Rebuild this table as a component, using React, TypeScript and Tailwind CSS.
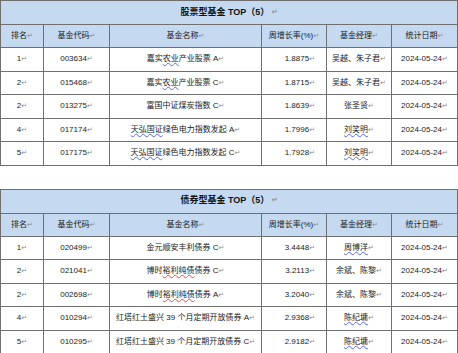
import React from "react";

type Seg = { t: string; u?: "blue" | "red" };
type Row = {
  rank: string;
  code: string;
  name: Seg[];
  rate: string;
  mgr: Seg[];
  date: string;
};

const Mark = () => (
  <span className="text-[7px] text-[#8a8a8a] align-middle" style={{ fontFamily: '"DejaVu Sans", sans-serif' }}>
    ↵
  </span>
);

const Segs = ({ segs }: { segs: Seg[] }) => (
  <>
    {segs.map((s, i) =>
      s.u === "blue" ? (
        <span key={i} className="underline decoration-wavy decoration-[#5468e8] decoration-[0.7px] underline-offset-[1px]">
          {s.t}
        </span>
      ) : s.u === "red" ? (
        <span key={i} className="underline decoration-wavy decoration-[#e05050] decoration-[0.7px] underline-offset-[1px]">
          {s.t}
        </span>
      ) : (
        <span key={i}>{s.t}</span>
      )
    )}
  </>
);

const stock: Row[] = [
  { rank: "1", code: "003634", name: [{ t: "嘉实" }, { t: "农业", u: "blue" }, { t: "产业股票 A" }], rate: "1.8875", mgr: [{ t: "吴越、朱子君" }], date: "2024-05-24" },
  { rank: "2", code: "015468", name: [{ t: "嘉实" }, { t: "农业", u: "blue" }, { t: "产业股票 C" }], rate: "1.8715", mgr: [{ t: "吴越、朱子君" }], date: "2024-05-24" },
  { rank: "2", code: "013275", name: [{ t: "富国中证煤炭指数 C" }], rate: "1.8639", mgr: [{ t: "张圣贤" }], date: "2024-05-24" },
  { rank: "4", code: "017174", name: [{ t: "天弘国证", u: "blue" }, { t: "绿色电力指数发起 A" }], rate: "1.7996", mgr: [{ t: "刘笑明", u: "blue" }], date: "2024-05-24" },
  { rank: "5", code: "017175", name: [{ t: "天弘国证", u: "blue" }, { t: "绿色电力指数发起 C" }], rate: "1.7928", mgr: [{ t: "刘笑明", u: "blue" }], date: "2024-05-24" },
];

const bond: Row[] = [
  { rank: "1", code: "020499", name: [{ t: "金元顺安丰利债券 C" }], rate: "3.4448", mgr: [{ t: "周博洋", u: "blue" }], date: "2024-05-24" },
  { rank: "2", code: "021041", name: [{ t: "博时" }, { t: "裕利纯债", u: "red" }, { t: "债券 C" }], rate: "3.2113", mgr: [{ t: "余斌、陈黎" }], date: "2024-05-24" },
  { rank: "2", code: "002698", name: [{ t: "博时" }, { t: "裕利纯债", u: "red" }, { t: "债券 A" }], rate: "3.2040", mgr: [{ t: "余斌、陈黎" }], date: "2024-05-24" },
  { rank: "4", code: "010294", name: [{ t: "红塔红土盛兴 39 个月定期开放债券 A" }], rate: "2.9368", mgr: [{ t: "陈纪墉", u: "blue" }], date: "2024-05-24" },
  { rank: "5", code: "010295", name: [{ t: "红塔红土盛兴 39 个月定期开放债券 C" }], rate: "2.9182", mgr: [{ t: "陈纪墉", u: "blue" }], date: "2024-05-24" },
];

const cell = "border border-[#6f6f6f] px-0 whitespace-nowrap overflow-visible";

function FundTable({ title, rows }: { title: string; rows: Row[] }) {
  return (
    <table className="table-fixed border-collapse w-[457px] text-[8px] text-[#222222]">
      <colgroup>
        <col className="w-[43px]" />
        <col className="w-[66px]" />
        <col className="w-[152px]" />
        <col className="w-[65px]" />
        <col className="w-[65px]" />
        <col className="w-[66px]" />
      </colgroup>
      <tbody>
        <tr className="h-[24px] bg-[#c5d9f0]">
          <td colSpan={6} className={`${cell} text-center font-bold text-[9px] text-[#111111]`}>
            {title} <Mark />
          </td>
        </tr>
        <tr className="h-[23px] bg-[#c5d9f0]">
          {["排名", "基金代码", "基金名称", "周增长率(%)", "基金经理", "统计日期"].map((h) => (
            <td key={h} className={`${cell} text-center`}>
              {h}
              <Mark />
            </td>
          ))}
        </tr>
        {rows.map((r, i) => (
          <tr key={i} className="h-[23.5px] bg-white">
            <td className={`${cell} text-center`}>
              {r.rank}
              <Mark />
            </td>
            <td className={`${cell} text-center`}>
              {r.code}
              <Mark />
            </td>
            <td className={`${cell} text-center`}>
              <Segs segs={r.name} />
              <Mark />
            </td>
            <td className={`${cell} text-right pr-[11px]`}>
              {r.rate}
              <Mark />
            </td>
            <td className={`${cell} text-center`}>
              <Segs segs={r.mgr} />
              <Mark />
            </td>
            <td className={`${cell} text-center`}>
              {r.date}
              <Mark />
            </td>
          </tr>
        ))}
      </tbody>
    </table>
  );
}

export default function App() {
  return (
    <div
      className="w-[458px] h-[353px] bg-white overflow-hidden flex flex-col gap-[23px]"
      style={{ fontFamily: '"Liberation Sans", "Noto Sans CJK SC", sans-serif' }}
    >
      <FundTable title="股票型基金 TOP（5）" rows={stock} />
      <FundTable title="债券型基金 TOP（5）" rows={bond} />
    </div>
  );
}
